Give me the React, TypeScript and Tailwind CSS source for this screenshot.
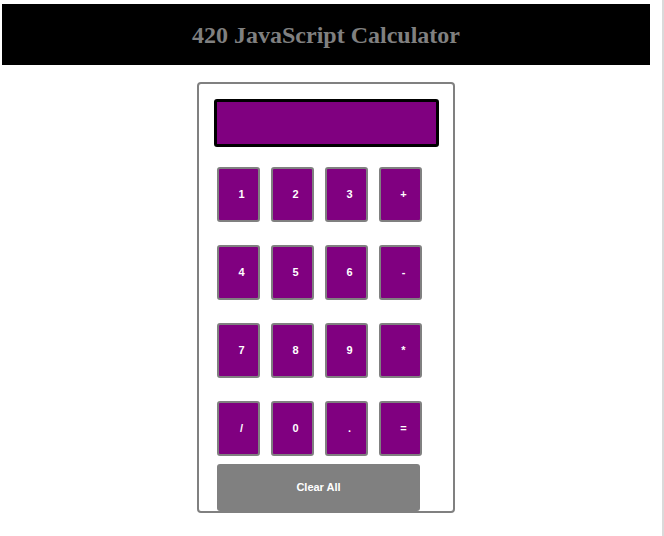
import React, { useState } from 'react';

const keys: string[][] = [
  ['1', '2', '3', '+'],
  ['4', '5', '6', '-'],
  ['7', '8', '9', '*'],
  ['/', '0', '.', '='],
];

const App: React.FC = () => {
  const [display, setDisplay] = useState('');

  const press = (key: string) => {
    if (key === '=') {
      try {
        // eslint-disable-next-line no-new-func
        setDisplay(String(Function(`return (${display})`)()));
      } catch {
        setDisplay('Error');
      }
      return;
    }
    setDisplay((d) => d + key);
  };

  return (
    <div className="h-[536px] w-[664px] border-r-2 border-[#dadada] bg-white pt-1 pl-[2px] pr-[12px]">
      <header className="flex h-[61px] items-center justify-center bg-black">
        <h1 className="text-[24px] font-bold text-[#808080] [font-family:'Liberation_Serif',serif]">
          420 JavaScript Calculator
        </h1>
      </header>

      <div className="mx-auto mt-[17px] w-[258px] rounded-[4px] border-2 border-[#808080] [font-family:'Liberation_Sans',Arial,sans-serif]">
        <div className="ml-[15px] mt-[15px] flex h-[48px] w-[225px] items-center justify-end rounded-[3px] border-[3px] border-black bg-[#800080] px-2 text-lg text-white">
          {display}
        </div>

        <div className="ml-[18px] mt-[20px] flex flex-col gap-[23px]">
          {keys.map((row, i) => (
            <div key={i} className="flex gap-[11px]">
              {row.map((k) => (
                <button
                  key={k}
                  onClick={() => press(k)}
                  className="flex h-[55px] w-[43px] items-center justify-center rounded-[3px] border-2 border-[#808080] bg-[#800080] pl-[6px] text-[11px] font-bold text-white"
                >
                  {k}
                </button>
              ))}
            </div>
          ))}
        </div>

        <button
          onClick={() => setDisplay('')}
          className="ml-[18px] mt-[8px] flex h-[47px] w-[203px] items-center justify-center rounded-[3px] bg-[#808080] text-[11px] font-bold text-white"
        >
          Clear All
        </button>
      </div>
    </div>
  );
};

export default App;
